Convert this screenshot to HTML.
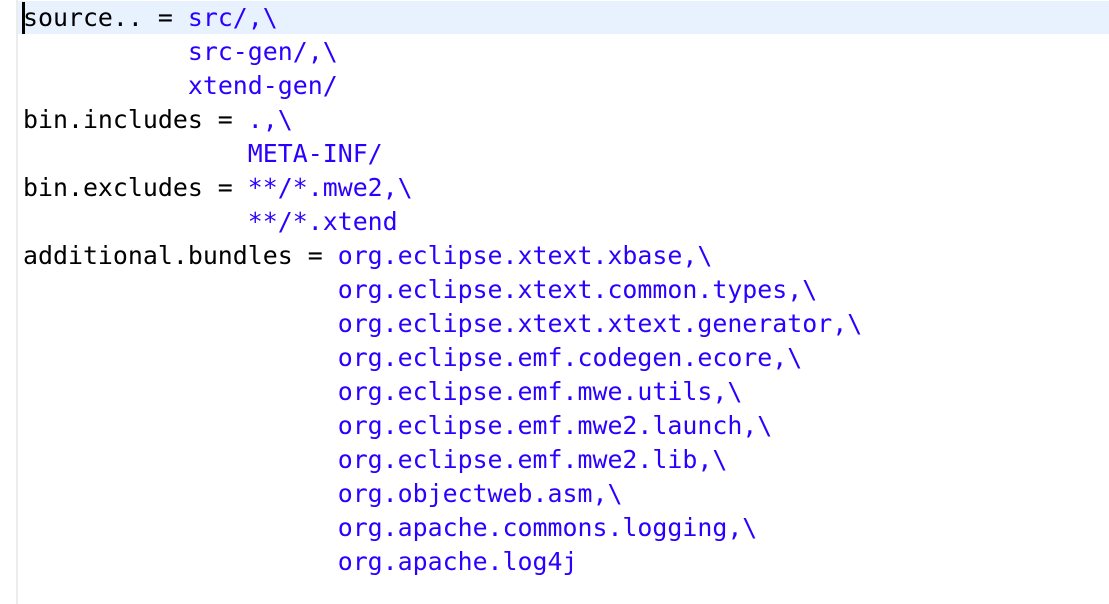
<html><head><style>
body{margin:0;width:1109px;height:604px;background:#fff;position:relative;overflow:hidden}
.bar{position:absolute;left:16px;top:0;width:2px;height:604px;background:#ececec}
.hl{position:absolute;left:18px;top:1px;width:1091px;height:33px;background:#e8f2fe}
.cur{position:absolute;left:22px;top:2px;width:3px;height:32px;background:#000}
pre{position:absolute;left:23px;top:1px;margin:0;font:24.9px/34px "DejaVu Sans Mono",monospace;color:#000}
b{font-weight:normal;color:#2a00ff}
</style></head><body>
<div class="bar"></div><div class="hl"></div>
<pre>source.. = <b>src/,\</b>
           <b>src-gen/,\</b>
           <b>xtend-gen/</b>
bin.includes = <b>.,\</b>
               <b>META-INF/</b>
bin.excludes = <b>**/*.mwe2,\</b>
               <b>**/*.xtend</b>
additional.bundles = <b>org.eclipse.xtext.xbase,\</b>
                     <b>org.eclipse.xtext.common.types,\</b>
                     <b>org.eclipse.xtext.xtext.generator,\</b>
                     <b>org.eclipse.emf.codegen.ecore,\</b>
                     <b>org.eclipse.emf.mwe.utils,\</b>
                     <b>org.eclipse.emf.mwe2.launch,\</b>
                     <b>org.eclipse.emf.mwe2.lib,\</b>
                     <b>org.objectweb.asm,\</b>
                     <b>org.apache.commons.logging,\</b>
                     <b>org.apache.log4j</b></pre>
<div class="cur"></div>
</body></html>
